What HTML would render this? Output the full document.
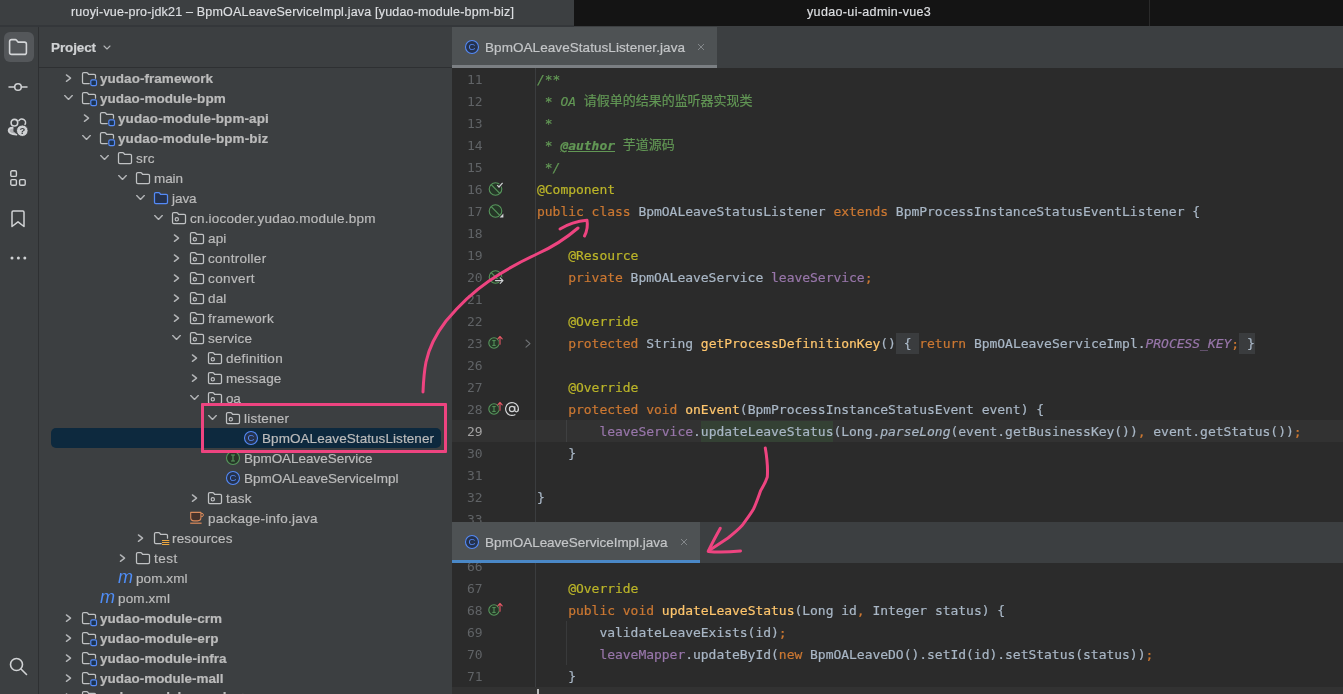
<!DOCTYPE html><html><head><meta charset="utf-8"><title>IDE</title><style>
html,body{margin:0;padding:0;background:#2b2b2b}
body{-webkit-font-smoothing:antialiased;will-change:transform;width:1343px;height:694px;overflow:hidden;background:#2b2b2b;position:relative;font-family:"Liberation Sans", "Noto Sans CJK SC", sans-serif;font-size:13px;color:#bbbbbb}
.abs{position:absolute}
.t{position:absolute;white-space:pre;line-height:20px;height:20px;color:#bbbbbb;font-size:13.5px;margin-top:0.5px;-webkit-text-stroke:0.2px currentColor}
.b{font-weight:bold}
.code{position:absolute;white-space:pre;font-family:"DejaVu Sans Mono", "Liberation Mono", "Noto Sans CJK SC", monospace;font-size:13px;letter-spacing:-0.026px;line-height:22px;height:22px;color:#a9b7c6;margin-top:0.9px;-webkit-text-stroke:0.2px currentColor}
.ln{position:absolute;font-family:"DejaVu Sans Mono", "Liberation Mono", "Noto Sans CJK SC", monospace;font-size:13px;letter-spacing:-0.026px;line-height:22px;height:22px;color:#606366;text-align:right;width:30.5px;margin-top:0.9px}
.k{color:#cc7832}.a{color:#bbb529}.c{color:#629755;font-style:italic}.f{color:#9876aa}.m{color:#ffc66d}
.sf{color:#9876aa;font-style:italic}.sm{font-style:italic}.tag{color:#629755;font-style:italic;font-weight:bold;text-decoration:underline}
.mv{position:absolute;width:18px;height:20px;line-height:20px;font-style:italic;font-size:19px;color:#4f8df6;transform:scaleX(0.95);transform-origin:0 0}
.cj{font-style:normal;position:relative;top:-1px}
.fold{background:#3a3c3e;padding:3.3px 0 3.5px}
.hl{background:#344134;padding:3.3px 0 3.5px}

</style></head><body>
<div class="abs" style="left:0;top:0;width:1343px;height:26px;background:#141414"></div>
<div class="abs" style="left:0;top:0;width:574px;height:27px;background:#34373a"></div>
<div class="abs" style="left:0;top:0;width:574px;height:25px;background:#3c3f41"></div>
<div class="abs" style="left:1149px;top:0;width:1px;height:26px;background:#2a2a2a"></div>
<div class="abs" style="left:71px;top:3px;line-height:18px;font-size:12.5px;color:#dddfe2;-webkit-text-stroke:0.2px #dddfe2;white-space:pre;letter-spacing:0.193px;">ruoyi-vue-pro-jdk21 – BpmOALeaveServiceImpl.java [yudao-module-bpm-biz]</div>
<div class="abs" style="left:807px;top:3px;line-height:18px;font-size:12.5px;color:#dddfe2;-webkit-text-stroke:0.2px #dddfe2;white-space:pre;letter-spacing:0.355px;">yudao-ui-admin-vue3</div>
<div class="abs" style="left:0;top:27px;width:452px;height:667px;background:#3c3f41"></div>
<div class="abs" style="left:574px;top:26px;width:769px;height:2px;background:#3c3f41"></div>
<div class="abs" style="left:38px;top:27px;width:1px;height:667px;background:#2e3032"></div>
<div class="abs" style="left:39px;top:67px;width:413px;height:1px;background:#2e3032"></div>
<div class="abs" style="left:3.5px;top:32px;width:30px;height:30px;border-radius:6px;background:#54575a"></div>
<svg style="position:absolute;left:8px;top:38px;overflow:visible" width="20" height="18" viewBox="0 0 20 18"><path d="M1.6 3.6 Q1.6 1.6 3.6 1.6 H7.3 Q8 1.6 8.5 2.2 L10 4.1 H16.4 Q18.4 4.1 18.4 6.1 V14.4 Q18.4 16.4 16.4 16.4 H3.6 Q1.6 16.4 1.6 14.4 Z" fill="none" stroke="#d4d6d8" stroke-width="1.6" stroke-linejoin="round"/></svg>
<svg style="position:absolute;left:8px;top:79px;overflow:visible" width="20" height="16" viewBox="0 0 20 16"><path d="M1 8 H6.6 M13.4 8 H19" stroke="#d0d2d4" stroke-width="1.5" stroke-linecap="round"/><circle cx="10" cy="8" r="3.3" fill="none" stroke="#d0d2d4" stroke-width="1.5"/></svg>
<svg style="position:absolute;left:6px;top:116px;overflow:visible" width="24" height="22" viewBox="0 0 24 22"><circle cx="8.4" cy="6.7" r="3.3" fill="none" stroke="#d0d2d4" stroke-width="1.6"/><path d="M12.9 4.6 A3.5 3.5 0 0 1 18.9 8.6" fill="none" stroke="#d0d2d4" stroke-width="1.6" stroke-linecap="round"/><path d="M6.6 11.8 C4 11.9 2.7 13.2 2.7 14.8 C2.8 16.8 5.6 18.3 10.4 18.6" fill="none" stroke="#d0d2d4" stroke-width="1.9" stroke-linecap="round"/><path d="M7.4 12 H6.4 C3.8 12 2.7 13.4 2.7 15 C2.8 17 6 18.4 10.4 18.6 L9 16.6 L7.4 15.6 Z" fill="#d0d2d4" fill-opacity="0.75" stroke="none"/><circle cx="16.3" cy="14.7" r="5.8" fill="#cfd1d3" stroke="#3c3f41" stroke-width="1"/><text x="16.3" y="18" text-anchor="middle" font-size="9.5" font-weight="bold" font-family='"Liberation Sans",sans-serif' fill="#3c3f41">?</text></svg>
<svg style="position:absolute;left:10px;top:170px;overflow:visible" width="16" height="16" viewBox="0 0 16 16"><rect x="0.8" y="0.8" width="5.6" height="5.6" rx="1.2" fill="none" stroke="#d0d2d4" stroke-width="1.4"/><rect x="0.8" y="9.6" width="5.6" height="5.6" rx="1.2" fill="none" stroke="#d0d2d4" stroke-width="1.4"/><rect x="9.6" y="9.6" width="5.6" height="5.6" rx="1.2" fill="none" stroke="#d0d2d4" stroke-width="1.4"/></svg>
<svg style="position:absolute;left:11px;top:210px;overflow:visible" width="14" height="18" viewBox="0 0 14 18"><path d="M1 2.2 Q1 1 2.2 1 H11.8 Q13 1 13 2.2 V16.5 L7 11.8 L1 16.5 Z" fill="none" stroke="#d0d2d4" stroke-width="1.5" stroke-linejoin="round"/></svg>
<svg style="position:absolute;left:10px;top:256px;overflow:visible" width="17" height="4" viewBox="0 0 17 4"><circle cx="2" cy="2" r="1.5" fill="#d0d2d4"/><circle cx="8.4" cy="2" r="1.5" fill="#d0d2d4"/><circle cx="14.8" cy="2" r="1.5" fill="#d0d2d4"/></svg>
<svg style="position:absolute;left:9px;top:656.8px;overflow:visible" width="19" height="19" viewBox="0 0 19 19"><circle cx="7.5" cy="7.5" r="6" fill="none" stroke="#d0d2d4" stroke-width="1.6"/><path d="M12 12 L17.5 17.5" stroke="#d0d2d4" stroke-width="1.6" stroke-linecap="round"/></svg>
<div class="t b" style="left:51px;top:37px;color:#d0d2d4;letter-spacing:-0.120px;">Project</div>
<svg style="position:absolute;left:103px;top:45px;overflow:visible" width="8" height="5" viewBox="0 0 8 5"><path d="M1 1 L4 4 L7 1" fill="none" stroke="#b4b6b8" stroke-width="1.1" stroke-linecap="round" stroke-linejoin="round"/></svg>
<div class="abs" style="left:51px;top:428px;width:390px;height:20px;border-radius:5px;background:#0d293e"></div>
<svg style="position:absolute;left:60px;top:70px;overflow:visible" width="16" height="16" viewBox="0 0 16 16"><path d="M6.4 4.9 L10.6 8.15 L6.4 11.4" fill="none" stroke="#b4b6b8" stroke-width="1.35" stroke-linecap="round" stroke-linejoin="round"/></svg>
<svg style="position:absolute;left:81px;top:70px;overflow:visible" width="16" height="16" viewBox="0 0 16 16"><path d="M8.2 13.5 H2.8 Q1.5 13.5 1.5 12.2 V3.8 Q1.5 2.5 2.8 2.5 H5.6 Q6.2 2.5 6.6 3 L7.6 4.3 H13.2 Q14.5 4.3 14.5 5.6 V8.2" fill="none" stroke="#c0c2c4" stroke-width="1.25" stroke-linejoin="round" stroke-linecap="round"/><rect x="9.8" y="9.9" width="5.7" height="5.7" rx="1.3" fill="#1d3350" stroke="#548af7" stroke-width="1.2"/></svg>
<div class="t b" style="left:100px;top:68px;letter-spacing:0.039px;">yudao-framework</div>
<svg style="position:absolute;left:60px;top:90px;overflow:visible" width="16" height="16" viewBox="0 0 16 16"><path d="M4.7 5.6 L8.5 9.4 L12.3 5.6" fill="none" stroke="#b4b6b8" stroke-width="1.35" stroke-linecap="round" stroke-linejoin="round"/></svg>
<svg style="position:absolute;left:81px;top:90px;overflow:visible" width="16" height="16" viewBox="0 0 16 16"><path d="M8.2 13.5 H2.8 Q1.5 13.5 1.5 12.2 V3.8 Q1.5 2.5 2.8 2.5 H5.6 Q6.2 2.5 6.6 3 L7.6 4.3 H13.2 Q14.5 4.3 14.5 5.6 V8.2" fill="none" stroke="#c0c2c4" stroke-width="1.25" stroke-linejoin="round" stroke-linecap="round"/><rect x="9.8" y="9.9" width="5.7" height="5.7" rx="1.3" fill="#1d3350" stroke="#548af7" stroke-width="1.2"/></svg>
<div class="t b" style="left:100px;top:88px;letter-spacing:0.029px;">yudao-module-bpm</div>
<svg style="position:absolute;left:78px;top:110px;overflow:visible" width="16" height="16" viewBox="0 0 16 16"><path d="M6.4 4.9 L10.6 8.15 L6.4 11.4" fill="none" stroke="#b4b6b8" stroke-width="1.35" stroke-linecap="round" stroke-linejoin="round"/></svg>
<svg style="position:absolute;left:99px;top:110px;overflow:visible" width="16" height="16" viewBox="0 0 16 16"><path d="M8.2 13.5 H2.8 Q1.5 13.5 1.5 12.2 V3.8 Q1.5 2.5 2.8 2.5 H5.6 Q6.2 2.5 6.6 3 L7.6 4.3 H13.2 Q14.5 4.3 14.5 5.6 V8.2" fill="none" stroke="#c0c2c4" stroke-width="1.25" stroke-linejoin="round" stroke-linecap="round"/><rect x="9.8" y="9.9" width="5.7" height="5.7" rx="1.3" fill="#1d3350" stroke="#548af7" stroke-width="1.2"/></svg>
<div class="t b" style="left:118px;top:108px;letter-spacing:0.079px;">yudao-module-bpm-api</div>
<svg style="position:absolute;left:78px;top:130px;overflow:visible" width="16" height="16" viewBox="0 0 16 16"><path d="M4.7 5.6 L8.5 9.4 L12.3 5.6" fill="none" stroke="#b4b6b8" stroke-width="1.35" stroke-linecap="round" stroke-linejoin="round"/></svg>
<svg style="position:absolute;left:99px;top:130px;overflow:visible" width="16" height="16" viewBox="0 0 16 16"><path d="M8.2 13.5 H2.8 Q1.5 13.5 1.5 12.2 V3.8 Q1.5 2.5 2.8 2.5 H5.6 Q6.2 2.5 6.6 3 L7.6 4.3 H13.2 Q14.5 4.3 14.5 5.6 V8.2" fill="none" stroke="#c0c2c4" stroke-width="1.25" stroke-linejoin="round" stroke-linecap="round"/><rect x="9.8" y="9.9" width="5.7" height="5.7" rx="1.3" fill="#1d3350" stroke="#548af7" stroke-width="1.2"/></svg>
<div class="t b" style="left:118px;top:128px;letter-spacing:0.092px;">yudao-module-bpm-biz</div>
<svg style="position:absolute;left:96px;top:150px;overflow:visible" width="16" height="16" viewBox="0 0 16 16"><path d="M4.7 5.6 L8.5 9.4 L12.3 5.6" fill="none" stroke="#b4b6b8" stroke-width="1.35" stroke-linecap="round" stroke-linejoin="round"/></svg>
<svg style="position:absolute;left:117px;top:150px;overflow:visible" width="16" height="16" viewBox="0 0 16 16"><path d="M1.5 3.8 Q1.5 2.5 2.8 2.5 H5.6 Q6.2 2.5 6.6 3 L7.6 4.3 H13.2 Q14.5 4.3 14.5 5.6 V12.2 Q14.5 13.5 13.2 13.5 H2.8 Q1.5 13.5 1.5 12.2 Z" fill="none" stroke="#c0c2c4" stroke-width="1.25" stroke-linejoin="round"/></svg>
<div class="t" style="left:136px;top:148px;letter-spacing:0.280px;">src</div>
<svg style="position:absolute;left:114px;top:170px;overflow:visible" width="16" height="16" viewBox="0 0 16 16"><path d="M4.7 5.6 L8.5 9.4 L12.3 5.6" fill="none" stroke="#b4b6b8" stroke-width="1.35" stroke-linecap="round" stroke-linejoin="round"/></svg>
<svg style="position:absolute;left:135px;top:170px;overflow:visible" width="16" height="16" viewBox="0 0 16 16"><path d="M1.5 3.8 Q1.5 2.5 2.8 2.5 H5.6 Q6.2 2.5 6.6 3 L7.6 4.3 H13.2 Q14.5 4.3 14.5 5.6 V12.2 Q14.5 13.5 13.2 13.5 H2.8 Q1.5 13.5 1.5 12.2 Z" fill="none" stroke="#c0c2c4" stroke-width="1.25" stroke-linejoin="round"/></svg>
<div class="t" style="left:154px;top:168px;letter-spacing:-0.076px;">main</div>
<svg style="position:absolute;left:132px;top:190px;overflow:visible" width="16" height="16" viewBox="0 0 16 16"><path d="M4.7 5.6 L8.5 9.4 L12.3 5.6" fill="none" stroke="#b4b6b8" stroke-width="1.35" stroke-linecap="round" stroke-linejoin="round"/></svg>
<svg style="position:absolute;left:153px;top:190px;overflow:visible" width="16" height="16" viewBox="0 0 16 16"><path d="M1.5 3.8 Q1.5 2.5 2.8 2.5 H5.6 Q6.2 2.5 6.6 3 L7.6 4.3 H13.2 Q14.5 4.3 14.5 5.6 V12.2 Q14.5 13.5 13.2 13.5 H2.8 Q1.5 13.5 1.5 12.2 Z" fill="#25324d" stroke="#548af7" stroke-width="1.25" stroke-linejoin="round"/></svg>
<div class="t" style="left:172px;top:188px;letter-spacing:-0.047px;">java</div>
<svg style="position:absolute;left:150px;top:210px;overflow:visible" width="16" height="16" viewBox="0 0 16 16"><path d="M4.7 5.6 L8.5 9.4 L12.3 5.6" fill="none" stroke="#b4b6b8" stroke-width="1.35" stroke-linecap="round" stroke-linejoin="round"/></svg>
<svg style="position:absolute;left:171px;top:210px;overflow:visible" width="16" height="16" viewBox="0 0 16 16"><path d="M1.5 3.8 Q1.5 2.5 2.8 2.5 H5.6 Q6.2 2.5 6.6 3 L7.6 4.3 H13.2 Q14.5 4.3 14.5 5.6 V12.2 Q14.5 13.5 13.2 13.5 H2.8 Q1.5 13.5 1.5 12.2 Z" fill="none" stroke="#c0c2c4" stroke-width="1.25" stroke-linejoin="round"/><circle cx="5.8" cy="9.3" r="1.65" fill="none" stroke="#c0c2c4" stroke-width="1.15"/></svg>
<div class="t" style="left:190px;top:208px;letter-spacing:0.203px;">cn.iocoder.yudao.module.bpm</div>
<svg style="position:absolute;left:168px;top:230px;overflow:visible" width="16" height="16" viewBox="0 0 16 16"><path d="M6.4 4.9 L10.6 8.15 L6.4 11.4" fill="none" stroke="#b4b6b8" stroke-width="1.35" stroke-linecap="round" stroke-linejoin="round"/></svg>
<svg style="position:absolute;left:189px;top:230px;overflow:visible" width="16" height="16" viewBox="0 0 16 16"><path d="M1.5 3.8 Q1.5 2.5 2.8 2.5 H5.6 Q6.2 2.5 6.6 3 L7.6 4.3 H13.2 Q14.5 4.3 14.5 5.6 V12.2 Q14.5 13.5 13.2 13.5 H2.8 Q1.5 13.5 1.5 12.2 Z" fill="none" stroke="#c0c2c4" stroke-width="1.25" stroke-linejoin="round"/><circle cx="5.8" cy="9.3" r="1.65" fill="none" stroke="#c0c2c4" stroke-width="1.15"/></svg>
<div class="t" style="left:208px;top:228px;letter-spacing:0.154px;">api</div>
<svg style="position:absolute;left:168px;top:250px;overflow:visible" width="16" height="16" viewBox="0 0 16 16"><path d="M6.4 4.9 L10.6 8.15 L6.4 11.4" fill="none" stroke="#b4b6b8" stroke-width="1.35" stroke-linecap="round" stroke-linejoin="round"/></svg>
<svg style="position:absolute;left:189px;top:250px;overflow:visible" width="16" height="16" viewBox="0 0 16 16"><path d="M1.5 3.8 Q1.5 2.5 2.8 2.5 H5.6 Q6.2 2.5 6.6 3 L7.6 4.3 H13.2 Q14.5 4.3 14.5 5.6 V12.2 Q14.5 13.5 13.2 13.5 H2.8 Q1.5 13.5 1.5 12.2 Z" fill="none" stroke="#c0c2c4" stroke-width="1.25" stroke-linejoin="round"/><circle cx="5.8" cy="9.3" r="1.65" fill="none" stroke="#c0c2c4" stroke-width="1.15"/></svg>
<div class="t" style="left:208px;top:248px;letter-spacing:0.291px;">controller</div>
<svg style="position:absolute;left:168px;top:270px;overflow:visible" width="16" height="16" viewBox="0 0 16 16"><path d="M6.4 4.9 L10.6 8.15 L6.4 11.4" fill="none" stroke="#b4b6b8" stroke-width="1.35" stroke-linecap="round" stroke-linejoin="round"/></svg>
<svg style="position:absolute;left:189px;top:270px;overflow:visible" width="16" height="16" viewBox="0 0 16 16"><path d="M1.5 3.8 Q1.5 2.5 2.8 2.5 H5.6 Q6.2 2.5 6.6 3 L7.6 4.3 H13.2 Q14.5 4.3 14.5 5.6 V12.2 Q14.5 13.5 13.2 13.5 H2.8 Q1.5 13.5 1.5 12.2 Z" fill="none" stroke="#c0c2c4" stroke-width="1.25" stroke-linejoin="round"/><circle cx="5.8" cy="9.3" r="1.65" fill="none" stroke="#c0c2c4" stroke-width="1.15"/></svg>
<div class="t" style="left:208px;top:268px;letter-spacing:0.387px;">convert</div>
<svg style="position:absolute;left:168px;top:290px;overflow:visible" width="16" height="16" viewBox="0 0 16 16"><path d="M6.4 4.9 L10.6 8.15 L6.4 11.4" fill="none" stroke="#b4b6b8" stroke-width="1.35" stroke-linecap="round" stroke-linejoin="round"/></svg>
<svg style="position:absolute;left:189px;top:290px;overflow:visible" width="16" height="16" viewBox="0 0 16 16"><path d="M1.5 3.8 Q1.5 2.5 2.8 2.5 H5.6 Q6.2 2.5 6.6 3 L7.6 4.3 H13.2 Q14.5 4.3 14.5 5.6 V12.2 Q14.5 13.5 13.2 13.5 H2.8 Q1.5 13.5 1.5 12.2 Z" fill="none" stroke="#c0c2c4" stroke-width="1.25" stroke-linejoin="round"/><circle cx="5.8" cy="9.3" r="1.65" fill="none" stroke="#c0c2c4" stroke-width="1.15"/></svg>
<div class="t" style="left:208px;top:288px;letter-spacing:0.154px;">dal</div>
<svg style="position:absolute;left:168px;top:310px;overflow:visible" width="16" height="16" viewBox="0 0 16 16"><path d="M6.4 4.9 L10.6 8.15 L6.4 11.4" fill="none" stroke="#b4b6b8" stroke-width="1.35" stroke-linecap="round" stroke-linejoin="round"/></svg>
<svg style="position:absolute;left:189px;top:310px;overflow:visible" width="16" height="16" viewBox="0 0 16 16"><path d="M1.5 3.8 Q1.5 2.5 2.8 2.5 H5.6 Q6.2 2.5 6.6 3 L7.6 4.3 H13.2 Q14.5 4.3 14.5 5.6 V12.2 Q14.5 13.5 13.2 13.5 H2.8 Q1.5 13.5 1.5 12.2 Z" fill="none" stroke="#c0c2c4" stroke-width="1.25" stroke-linejoin="round"/><circle cx="5.8" cy="9.3" r="1.65" fill="none" stroke="#c0c2c4" stroke-width="1.15"/></svg>
<div class="t" style="left:208px;top:308px;letter-spacing:0.328px;">framework</div>
<svg style="position:absolute;left:168px;top:330px;overflow:visible" width="16" height="16" viewBox="0 0 16 16"><path d="M4.7 5.6 L8.5 9.4 L12.3 5.6" fill="none" stroke="#b4b6b8" stroke-width="1.35" stroke-linecap="round" stroke-linejoin="round"/></svg>
<svg style="position:absolute;left:189px;top:330px;overflow:visible" width="16" height="16" viewBox="0 0 16 16"><path d="M1.5 3.8 Q1.5 2.5 2.8 2.5 H5.6 Q6.2 2.5 6.6 3 L7.6 4.3 H13.2 Q14.5 4.3 14.5 5.6 V12.2 Q14.5 13.5 13.2 13.5 H2.8 Q1.5 13.5 1.5 12.2 Z" fill="none" stroke="#c0c2c4" stroke-width="1.25" stroke-linejoin="round"/><circle cx="5.8" cy="9.3" r="1.65" fill="none" stroke="#c0c2c4" stroke-width="1.15"/></svg>
<div class="t" style="left:208px;top:328px;letter-spacing:0.190px;">service</div>
<svg style="position:absolute;left:186px;top:350px;overflow:visible" width="16" height="16" viewBox="0 0 16 16"><path d="M6.4 4.9 L10.6 8.15 L6.4 11.4" fill="none" stroke="#b4b6b8" stroke-width="1.35" stroke-linecap="round" stroke-linejoin="round"/></svg>
<svg style="position:absolute;left:207px;top:350px;overflow:visible" width="16" height="16" viewBox="0 0 16 16"><path d="M1.5 3.8 Q1.5 2.5 2.8 2.5 H5.6 Q6.2 2.5 6.6 3 L7.6 4.3 H13.2 Q14.5 4.3 14.5 5.6 V12.2 Q14.5 13.5 13.2 13.5 H2.8 Q1.5 13.5 1.5 12.2 Z" fill="none" stroke="#c0c2c4" stroke-width="1.25" stroke-linejoin="round"/><circle cx="5.8" cy="9.3" r="1.65" fill="none" stroke="#c0c2c4" stroke-width="1.15"/></svg>
<div class="t" style="left:226px;top:348px;letter-spacing:0.290px;">definition</div>
<svg style="position:absolute;left:186px;top:370px;overflow:visible" width="16" height="16" viewBox="0 0 16 16"><path d="M6.4 4.9 L10.6 8.15 L6.4 11.4" fill="none" stroke="#b4b6b8" stroke-width="1.35" stroke-linecap="round" stroke-linejoin="round"/></svg>
<svg style="position:absolute;left:207px;top:370px;overflow:visible" width="16" height="16" viewBox="0 0 16 16"><path d="M1.5 3.8 Q1.5 2.5 2.8 2.5 H5.6 Q6.2 2.5 6.6 3 L7.6 4.3 H13.2 Q14.5 4.3 14.5 5.6 V12.2 Q14.5 13.5 13.2 13.5 H2.8 Q1.5 13.5 1.5 12.2 Z" fill="none" stroke="#c0c2c4" stroke-width="1.25" stroke-linejoin="round"/><circle cx="5.8" cy="9.3" r="1.65" fill="none" stroke="#c0c2c4" stroke-width="1.15"/></svg>
<div class="t" style="left:226px;top:368px;letter-spacing:0.080px;">message</div>
<svg style="position:absolute;left:186px;top:390px;overflow:visible" width="16" height="16" viewBox="0 0 16 16"><path d="M4.7 5.6 L8.5 9.4 L12.3 5.6" fill="none" stroke="#b4b6b8" stroke-width="1.35" stroke-linecap="round" stroke-linejoin="round"/></svg>
<svg style="position:absolute;left:207px;top:390px;overflow:visible" width="16" height="16" viewBox="0 0 16 16"><path d="M1.5 3.8 Q1.5 2.5 2.8 2.5 H5.6 Q6.2 2.5 6.6 3 L7.6 4.3 H13.2 Q14.5 4.3 14.5 5.6 V12.2 Q14.5 13.5 13.2 13.5 H2.8 Q1.5 13.5 1.5 12.2 Z" fill="none" stroke="#c0c2c4" stroke-width="1.25" stroke-linejoin="round"/><circle cx="5.8" cy="9.3" r="1.65" fill="none" stroke="#c0c2c4" stroke-width="1.15"/></svg>
<div class="t" style="left:226px;top:388px;letter-spacing:-0.221px;">oa</div>
<svg style="position:absolute;left:204px;top:410px;overflow:visible" width="16" height="16" viewBox="0 0 16 16"><path d="M4.7 5.6 L8.5 9.4 L12.3 5.6" fill="none" stroke="#b4b6b8" stroke-width="1.35" stroke-linecap="round" stroke-linejoin="round"/></svg>
<svg style="position:absolute;left:225px;top:410px;overflow:visible" width="16" height="16" viewBox="0 0 16 16"><path d="M1.5 3.8 Q1.5 2.5 2.8 2.5 H5.6 Q6.2 2.5 6.6 3 L7.6 4.3 H13.2 Q14.5 4.3 14.5 5.6 V12.2 Q14.5 13.5 13.2 13.5 H2.8 Q1.5 13.5 1.5 12.2 Z" fill="none" stroke="#c0c2c4" stroke-width="1.25" stroke-linejoin="round"/><circle cx="5.8" cy="9.3" r="1.65" fill="none" stroke="#c0c2c4" stroke-width="1.15"/></svg>
<div class="t" style="left:244px;top:408px;letter-spacing:0.209px;">listener</div>
<svg style="position:absolute;left:243px;top:430px;overflow:visible" width="16" height="16" viewBox="0 0 16 16"><circle cx="8" cy="8" r="6.5" fill="#25324d" stroke="#548af7" stroke-width="1.1"/><text x="8" y="11.3" text-anchor="middle" font-family='"Liberation Sans",sans-serif' font-size="9.5" fill="#548af7">C</text></svg>
<div class="t" style="left:262px;top:428px;letter-spacing:0.070px;">BpmOALeaveStatusListener</div>
<svg style="position:absolute;left:225px;top:450px;overflow:visible" width="16" height="16" viewBox="0 0 16 16"><circle cx="8" cy="8" r="6.5" fill="#253627" stroke="#57965c" stroke-width="1.1"/><path d="M6 5 H10 M6 11 H10 M8 5 V11" stroke="#57965c" stroke-width="1.1" fill="none"/></svg>
<div class="t" style="left:244px;top:448px;letter-spacing:-0.034px;">BpmOALeaveService</div>
<svg style="position:absolute;left:225px;top:470px;overflow:visible" width="16" height="16" viewBox="0 0 16 16"><circle cx="8" cy="8" r="6.5" fill="#25324d" stroke="#548af7" stroke-width="1.1"/><text x="8" y="11.3" text-anchor="middle" font-family='"Liberation Sans",sans-serif' font-size="9.5" fill="#548af7">C</text></svg>
<div class="t" style="left:244px;top:468px;letter-spacing:-0.004px;">BpmOALeaveServiceImpl</div>
<svg style="position:absolute;left:186px;top:490px;overflow:visible" width="16" height="16" viewBox="0 0 16 16"><path d="M6.4 4.9 L10.6 8.15 L6.4 11.4" fill="none" stroke="#b4b6b8" stroke-width="1.35" stroke-linecap="round" stroke-linejoin="round"/></svg>
<svg style="position:absolute;left:207px;top:490px;overflow:visible" width="16" height="16" viewBox="0 0 16 16"><path d="M1.5 3.8 Q1.5 2.5 2.8 2.5 H5.6 Q6.2 2.5 6.6 3 L7.6 4.3 H13.2 Q14.5 4.3 14.5 5.6 V12.2 Q14.5 13.5 13.2 13.5 H2.8 Q1.5 13.5 1.5 12.2 Z" fill="none" stroke="#c0c2c4" stroke-width="1.25" stroke-linejoin="round"/><circle cx="5.8" cy="9.3" r="1.65" fill="none" stroke="#c0c2c4" stroke-width="1.15"/></svg>
<div class="t" style="left:226px;top:488px;letter-spacing:0.210px;">task</div>
<svg style="position:absolute;left:189px;top:510px;overflow:visible" width="16" height="16" viewBox="0 0 16 16"><path d="M1.7 2.4 H11.9 V7.6 Q11.9 10.9 8.6 10.9 H5 Q1.7 10.9 1.7 7.6 Z" fill="#45322b" stroke="#d98a5b" stroke-width="1.1" stroke-linejoin="round"/><path d="M12 3.4 H13 Q14.4 3.4 14.4 4.9 Q14.4 6.6 12.8 6.6 H12" fill="none" stroke="#d98a5b" stroke-width="1"/><path d="M1.2 13.2 H12.6" stroke="#d98a5b" stroke-width="1.2"/></svg>
<div class="t" style="left:208px;top:508px;letter-spacing:0.223px;">package-info.java</div>
<svg style="position:absolute;left:132px;top:530px;overflow:visible" width="16" height="16" viewBox="0 0 16 16"><path d="M6.4 4.9 L10.6 8.15 L6.4 11.4" fill="none" stroke="#b4b6b8" stroke-width="1.35" stroke-linecap="round" stroke-linejoin="round"/></svg>
<svg style="position:absolute;left:153px;top:530px;overflow:visible" width="16" height="16" viewBox="0 0 16 16"><path d="M8.2 13.5 H2.8 Q1.5 13.5 1.5 12.2 V3.8 Q1.5 2.5 2.8 2.5 H5.6 Q6.2 2.5 6.6 3 L7.6 4.3 H13.2 Q14.5 4.3 14.5 5.6 V8.2" fill="none" stroke="#c0c2c4" stroke-width="1.25" stroke-linejoin="round" stroke-linecap="round"/><path d="M9 10.5 H16.3 M9 12.5 H16.3 M9 14.5 H16.3" stroke="#eaa640" stroke-width="1.1"/></svg>
<div class="t" style="left:172px;top:528px;letter-spacing:0.143px;">resources</div>
<svg style="position:absolute;left:114px;top:550px;overflow:visible" width="16" height="16" viewBox="0 0 16 16"><path d="M6.4 4.9 L10.6 8.15 L6.4 11.4" fill="none" stroke="#b4b6b8" stroke-width="1.35" stroke-linecap="round" stroke-linejoin="round"/></svg>
<svg style="position:absolute;left:135px;top:550px;overflow:visible" width="16" height="16" viewBox="0 0 16 16"><path d="M1.5 3.8 Q1.5 2.5 2.8 2.5 H5.6 Q6.2 2.5 6.6 3 L7.6 4.3 H13.2 Q14.5 4.3 14.5 5.6 V12.2 Q14.5 13.5 13.2 13.5 H2.8 Q1.5 13.5 1.5 12.2 Z" fill="none" stroke="#c0c2c4" stroke-width="1.25" stroke-linejoin="round"/></svg>
<div class="t" style="left:154px;top:548px;letter-spacing:0.496px;">test</div>
<div class="mv" style="left:118px;top:567px">m</div>
<div class="t" style="left:136px;top:568px;letter-spacing:0.075px;">pom.xml</div>
<div class="mv" style="left:100px;top:587px">m</div>
<div class="t" style="left:118px;top:588px;letter-spacing:0.151px;">pom.xml</div>
<svg style="position:absolute;left:60px;top:610px;overflow:visible" width="16" height="16" viewBox="0 0 16 16"><path d="M6.4 4.9 L10.6 8.15 L6.4 11.4" fill="none" stroke="#b4b6b8" stroke-width="1.35" stroke-linecap="round" stroke-linejoin="round"/></svg>
<svg style="position:absolute;left:81px;top:610px;overflow:visible" width="16" height="16" viewBox="0 0 16 16"><path d="M8.2 13.5 H2.8 Q1.5 13.5 1.5 12.2 V3.8 Q1.5 2.5 2.8 2.5 H5.6 Q6.2 2.5 6.6 3 L7.6 4.3 H13.2 Q14.5 4.3 14.5 5.6 V8.2" fill="none" stroke="#c0c2c4" stroke-width="1.25" stroke-linejoin="round" stroke-linecap="round"/><rect x="9.8" y="9.9" width="5.7" height="5.7" rx="1.3" fill="#1d3350" stroke="#548af7" stroke-width="1.2"/></svg>
<div class="t b" style="left:100px;top:608px;letter-spacing:0.031px;">yudao-module-crm</div>
<svg style="position:absolute;left:60px;top:630px;overflow:visible" width="16" height="16" viewBox="0 0 16 16"><path d="M6.4 4.9 L10.6 8.15 L6.4 11.4" fill="none" stroke="#b4b6b8" stroke-width="1.35" stroke-linecap="round" stroke-linejoin="round"/></svg>
<svg style="position:absolute;left:81px;top:630px;overflow:visible" width="16" height="16" viewBox="0 0 16 16"><path d="M8.2 13.5 H2.8 Q1.5 13.5 1.5 12.2 V3.8 Q1.5 2.5 2.8 2.5 H5.6 Q6.2 2.5 6.6 3 L7.6 4.3 H13.2 Q14.5 4.3 14.5 5.6 V8.2" fill="none" stroke="#c0c2c4" stroke-width="1.25" stroke-linejoin="round" stroke-linecap="round"/><rect x="9.8" y="9.9" width="5.7" height="5.7" rx="1.3" fill="#1d3350" stroke="#548af7" stroke-width="1.2"/></svg>
<div class="t b" style="left:100px;top:628px;letter-spacing:0.047px;">yudao-module-erp</div>
<svg style="position:absolute;left:60px;top:650px;overflow:visible" width="16" height="16" viewBox="0 0 16 16"><path d="M6.4 4.9 L10.6 8.15 L6.4 11.4" fill="none" stroke="#b4b6b8" stroke-width="1.35" stroke-linecap="round" stroke-linejoin="round"/></svg>
<svg style="position:absolute;left:81px;top:650px;overflow:visible" width="16" height="16" viewBox="0 0 16 16"><path d="M8.2 13.5 H2.8 Q1.5 13.5 1.5 12.2 V3.8 Q1.5 2.5 2.8 2.5 H5.6 Q6.2 2.5 6.6 3 L7.6 4.3 H13.2 Q14.5 4.3 14.5 5.6 V8.2" fill="none" stroke="#c0c2c4" stroke-width="1.25" stroke-linejoin="round" stroke-linecap="round"/><rect x="9.8" y="9.9" width="5.7" height="5.7" rx="1.3" fill="#1d3350" stroke="#548af7" stroke-width="1.2"/></svg>
<div class="t b" style="left:100px;top:648px;letter-spacing:0.028px;">yudao-module-infra</div>
<svg style="position:absolute;left:60px;top:670px;overflow:visible" width="16" height="16" viewBox="0 0 16 16"><path d="M6.4 4.9 L10.6 8.15 L6.4 11.4" fill="none" stroke="#b4b6b8" stroke-width="1.35" stroke-linecap="round" stroke-linejoin="round"/></svg>
<svg style="position:absolute;left:81px;top:670px;overflow:visible" width="16" height="16" viewBox="0 0 16 16"><path d="M8.2 13.5 H2.8 Q1.5 13.5 1.5 12.2 V3.8 Q1.5 2.5 2.8 2.5 H5.6 Q6.2 2.5 6.6 3 L7.6 4.3 H13.2 Q14.5 4.3 14.5 5.6 V8.2" fill="none" stroke="#c0c2c4" stroke-width="1.25" stroke-linejoin="round" stroke-linecap="round"/><rect x="9.8" y="9.9" width="5.7" height="5.7" rx="1.3" fill="#1d3350" stroke="#548af7" stroke-width="1.2"/></svg>
<div class="t b" style="left:100px;top:668px;letter-spacing:-0.016px;">yudao-module-mall</div>
<svg style="position:absolute;left:60px;top:688.5px;overflow:visible" width="16" height="16" viewBox="0 0 16 16"><path d="M6.4 4.9 L10.6 8.15 L6.4 11.4" fill="none" stroke="#b4b6b8" stroke-width="1.35" stroke-linecap="round" stroke-linejoin="round"/></svg>
<svg style="position:absolute;left:81px;top:688.5px;overflow:visible" width="16" height="16" viewBox="0 0 16 16"><path d="M8.2 13.5 H2.8 Q1.5 13.5 1.5 12.2 V3.8 Q1.5 2.5 2.8 2.5 H5.6 Q6.2 2.5 6.6 3 L7.6 4.3 H13.2 Q14.5 4.3 14.5 5.6 V8.2" fill="none" stroke="#c0c2c4" stroke-width="1.25" stroke-linejoin="round" stroke-linecap="round"/><rect x="9.8" y="9.9" width="5.7" height="5.7" rx="1.3" fill="#1d3350" stroke="#548af7" stroke-width="1.2"/></svg>
<div class="t b" style="left:100px;top:686.5px;letter-spacing:-0.340px;">yudao-module-member</div>
<div class="abs" style="left:452px;top:27px;width:891px;height:41px;background:#3c3f41"></div>
<div class="abs" style="left:452px;top:27px;width:265px;height:41px;background:#4e5254"></div>
<div class="abs" style="left:452px;top:65px;width:265px;height:3px;background:#7b7f83"></div>
<svg style="position:absolute;left:464px;top:39px;overflow:visible" width="16" height="16" viewBox="0 0 16 16"><circle cx="8" cy="8" r="6.5" fill="#25324d" stroke="#548af7" stroke-width="1.1"/><text x="8" y="11.3" text-anchor="middle" font-family='"Liberation Sans",sans-serif' font-size="9.5" fill="#548af7">C</text></svg>
<div class="t" style="left:485px;top:37px;color:#c4c6c8;letter-spacing:0.066px;">BpmOALeaveStatusListener.java</div>
<svg style="position:absolute;left:697px;top:43px;overflow:visible" width="8" height="8" viewBox="0 0 8 8"><path d="M1 1 L7 7 M7 1 L1 7" stroke="#83878a" stroke-width="1"/></svg>
<div class="abs" style="left:452px;top:420px;width:891px;height:22px;background:#323232"></div>
<div class="abs" style="left:535px;top:68px;width:1px;height:454px;background:#3b3d3f"></div>
<div class="abs" style="left:535px;top:563px;width:1px;height:131px;background:#3b3d3f"></div>
<div class="abs" style="left:566px;top:420px;width:1px;height:22px;background:#3f4041"></div>
<div class="abs" style="left:566px;top:621px;width:1px;height:44px;background:#393a3b"></div>
<div class="abs" style="left:452px;top:68px;width:891px;height:454px;overflow:hidden">
<div class="ln" style="left:0;top:0px">11</div>
<div class="code" style="left:85px;top:0px"><span class="c">/**</span></div>
<div class="ln" style="left:0;top:22px">12</div>
<div class="code" style="left:85px;top:22px"><span class="c"> * OA <span class="cj">请假单的结果的监听器实现类</span></span></div>
<div class="ln" style="left:0;top:44px">13</div>
<div class="code" style="left:85px;top:44px"><span class="c"> *</span></div>
<div class="ln" style="left:0;top:66px">14</div>
<div class="code" style="left:85px;top:66px"><span class="c"> * </span><span class="tag">@author</span><span class="c"> <span class="cj">芋道源码</span></span></div>
<div class="ln" style="left:0;top:88px">15</div>
<div class="code" style="left:85px;top:88px"><span class="c"> */</span></div>
<div class="ln" style="left:0;top:110px">16</div>
<div class="code" style="left:85px;top:110px"><span class="a">@Component</span></div>
<div class="ln" style="left:0;top:132px">17</div>
<div class="code" style="left:85px;top:132px"><span class="k">public class</span> BpmOALeaveStatusListener <span class="k">extends</span> BpmProcessInstanceStatusEventListener {</div>
<div class="ln" style="left:0;top:154px">18</div>
<div class="ln" style="left:0;top:176px">19</div>
<div class="code" style="left:85px;top:176px">    <span class="a">@Resource</span></div>
<div class="ln" style="left:0;top:198px">20</div>
<div class="code" style="left:85px;top:198px">    <span class="k">private</span> BpmOALeaveService <span class="f">leaveService</span><span class="k">;</span></div>
<div class="ln" style="left:0;top:220px">21</div>
<div class="ln" style="left:0;top:242px">22</div>
<div class="code" style="left:85px;top:242px">    <span class="a">@Override</span></div>
<div class="ln" style="left:0;top:264px">23</div>
<div class="code" style="left:85px;top:264px">    <span class="k">protected</span> String <span class="m">getProcessDefinitionKey</span>()<span class="fold"> { </span><span class="k">return</span> BpmOALeaveServiceImpl.<span class="sf">PROCESS_KEY</span><span class="k">;</span><span class="fold"> }</span></div>
<div class="ln" style="left:0;top:286px">26</div>
<div class="ln" style="left:0;top:308px">27</div>
<div class="code" style="left:85px;top:308px">    <span class="a">@Override</span></div>
<div class="ln" style="left:0;top:330px">28</div>
<div class="code" style="left:85px;top:330px">    <span class="k">protected void</span> <span class="m">onEvent</span>(BpmProcessInstanceStatusEvent event) {</div>
<div class="ln" style="left:0;top:352px;color:#a4a3a3">29</div>
<div class="code" style="left:85px;top:352px">        <span class="f">leaveService</span>.<span class="hl">updateLeaveStatus</span>(Long.<span class="sm">parseLong</span>(event.getBusinessKey())<span class="k">,</span> event.getStatus())<span class="k">;</span></div>
<div class="ln" style="left:0;top:374px">30</div>
<div class="code" style="left:85px;top:374px">    }</div>
<div class="ln" style="left:0;top:396px">31</div>
<div class="ln" style="left:0;top:418px">32</div>
<div class="code" style="left:85px;top:418px">}</div>
<div class="ln" style="left:0;top:440px">33</div>
</div>
<div class="abs" style="left:452px;top:522px;width:891px;height:41px;background:#3c3f41"></div>
<div class="abs" style="left:452px;top:522px;width:248px;height:41px;background:#4e5254"></div>
<div class="abs" style="left:452px;top:560px;width:248px;height:3px;background:#4a88c7"></div>
<svg style="position:absolute;left:464px;top:534px;overflow:visible" width="16" height="16" viewBox="0 0 16 16"><circle cx="8" cy="8" r="6.5" fill="#25324d" stroke="#548af7" stroke-width="1.1"/><text x="8" y="11.3" text-anchor="middle" font-family='"Liberation Sans",sans-serif' font-size="9.5" fill="#548af7">C</text></svg>
<div class="t" style="left:485px;top:532px;color:#c4c6c8;letter-spacing:-0.023px;">BpmOALeaveServiceImpl.java</div>
<svg style="position:absolute;left:680px;top:538px;overflow:visible" width="8" height="8" viewBox="0 0 8 8"><path d="M1 1 L7 7 M7 1 L1 7" stroke="#83878a" stroke-width="1"/></svg>
<div class="abs" style="left:452px;top:563px;width:891px;height:131px;overflow:hidden">
<div class="abs" style="left:0;top:124px;width:891px;height:22px;background:#323232"></div>
<div class="abs" style="left:85px;top:126px;width:2px;height:18px;background:#bbbbbb"></div>
<div class="ln" style="left:0;top:-8px">66</div>
<div class="ln" style="left:0;top:14px">67</div>
<div class="code" style="left:85px;top:14px">    <span class="a">@Override</span></div>
<div class="ln" style="left:0;top:36px">68</div>
<div class="code" style="left:85px;top:36px">    <span class="k">public void</span> <span class="m">updateLeaveStatus</span>(Long id<span class="k">,</span> Integer status) {</div>
<div class="ln" style="left:0;top:58px">69</div>
<div class="code" style="left:85px;top:58px">        validateLeaveExists(id)<span class="k">;</span></div>
<div class="ln" style="left:0;top:80px">70</div>
<div class="code" style="left:85px;top:80px">        <span class="f">leaveMapper</span>.updateById(<span class="k">new</span> BpmOALeaveDO().setId(id).setStatus(status))<span class="k">;</span></div>
<div class="ln" style="left:0;top:102px">71</div>
<div class="code" style="left:85px;top:102px">    }</div>
<div class="ln" style="left:0;top:124px">72</div>
</div>
<svg style="position:absolute;left:488px;top:181px;overflow:visible" width="16" height="16" viewBox="0 0 16 16"><circle cx="7.5" cy="8" r="6.3" fill="#253627" stroke="#57965c" stroke-width="1.1"/><path d="M3.2 3.6 L11.8 12.4" stroke="#57965c" stroke-width="1.2"/><path d="M9.2 4.2 L11 6 L14.6 1.8" fill="none" stroke="#2b2b2b" stroke-width="3"/><path d="M9.2 4.2 L11 6 L14.6 1.8" fill="none" stroke="#d0d2d4" stroke-width="1.2"/></svg>
<svg style="position:absolute;left:488px;top:203px;overflow:visible" width="16" height="16" viewBox="0 0 16 16"><circle cx="7.5" cy="8" r="6.3" fill="#253627" stroke="#57965c" stroke-width="1.1"/><path d="M3.2 3.6 L11.8 12.4" stroke="#57965c" stroke-width="1.2"/><path d="M15.6 9.6 V14.6 H10.6 Z" fill="#2b2b2b"/><path d="M15.4 10.6 V14.4 H11.6 Z" fill="#d4d6d8"/></svg>
<svg style="position:absolute;left:488px;top:269px;overflow:visible" width="16" height="16" viewBox="0 0 16 16"><circle cx="7.5" cy="8" r="6.3" fill="#253627" stroke="#57965c" stroke-width="1.1"/><path d="M3.2 3.6 L11.8 12.4" stroke="#57965c" stroke-width="1.2"/><path d="M7.5 11.6 H15 M12.2 8.8 L15 11.6 L12.2 14.4" fill="none" stroke="#2b2b2b" stroke-width="3"/><path d="M7.5 11.6 H15 M12.2 8.8 L15 11.6 L12.2 14.4" fill="none" stroke="#d0d2d4" stroke-width="1.1" stroke-linecap="round" stroke-linejoin="round"/></svg>
<svg style="position:absolute;left:487.5px;top:334px;overflow:visible" width="16" height="16" viewBox="0 0 16 16"><circle cx="6" cy="9" r="5.2" fill="#253627" stroke="#57965c" stroke-width="1.1"/><path d="M4.3 6.6 H7.7 M4.3 11.4 H7.7 M6 6.6 V11.4" stroke="#57965c" stroke-width="1" fill="none"/><path d="M12 10.2 V2.6 M9.8 4.8 L12 2.4 L14.2 4.8" fill="none" stroke="#2b2b2b" stroke-width="2.6"/><path d="M12 10.2 V2.6 M9.8 4.8 L12 2.4 L14.2 4.8" fill="none" stroke="#e55765" stroke-width="1.1" stroke-linecap="round" stroke-linejoin="round"/></svg>
<svg style="position:absolute;left:487.5px;top:400px;overflow:visible" width="16" height="16" viewBox="0 0 16 16"><circle cx="6" cy="9" r="5.2" fill="#253627" stroke="#57965c" stroke-width="1.1"/><path d="M4.3 6.6 H7.7 M4.3 11.4 H7.7 M6 6.6 V11.4" stroke="#57965c" stroke-width="1" fill="none"/><path d="M12 10.2 V2.6 M9.8 4.8 L12 2.4 L14.2 4.8" fill="none" stroke="#2b2b2b" stroke-width="2.6"/><path d="M12 10.2 V2.6 M9.8 4.8 L12 2.4 L14.2 4.8" fill="none" stroke="#e55765" stroke-width="1.1" stroke-linecap="round" stroke-linejoin="round"/></svg>
<svg style="position:absolute;left:487.5px;top:601px;overflow:visible" width="16" height="16" viewBox="0 0 16 16"><circle cx="6" cy="9" r="5.2" fill="#253627" stroke="#57965c" stroke-width="1.1"/><path d="M4.3 6.6 H7.7 M4.3 11.4 H7.7 M6 6.6 V11.4" stroke="#57965c" stroke-width="1" fill="none"/><path d="M12 10.2 V2.6 M9.8 4.8 L12 2.4 L14.2 4.8" fill="none" stroke="#2b2b2b" stroke-width="2.6"/><path d="M12 10.2 V2.6 M9.8 4.8 L12 2.4 L14.2 4.8" fill="none" stroke="#e55765" stroke-width="1.1" stroke-linecap="round" stroke-linejoin="round"/></svg>
<svg style="position:absolute;left:504px;top:400.5px;overflow:visible" width="16" height="16" viewBox="0 0 16 16"><circle cx="8" cy="8" r="6.4" fill="none" stroke="#d0d2d4" stroke-width="1.2" stroke-dasharray="34 7" transform="rotate(58 8 8)"/><circle cx="8" cy="8" r="2.6" fill="none" stroke="#d0d2d4" stroke-width="1.2"/><path d="M10.8 5.2 V9 Q10.8 10.8 12.4 10.8 Q14.4 10.6 14.4 8" fill="none" stroke="#d0d2d4" stroke-width="1.2"/></svg>
<svg style="position:absolute;left:525px;top:339px;overflow:visible" width="6" height="9" viewBox="0 0 6 9"><path d="M1 1 L5 4.6 L1 8.2" fill="none" stroke="#707376" stroke-width="1.1" stroke-linecap="round" stroke-linejoin="round"/></svg>
<div class="abs" style="left:201px;top:403px;width:240px;height:44px;border:3px solid #ee4480;border-radius:1px"></div>
<svg class="abs" style="left:0;top:0" width="1343" height="694" viewBox="0 0 1343 694" fill="none" stroke="#ee4480" stroke-width="3" stroke-linecap="round" stroke-linejoin="round"><path d="M423 392 C423.5 380 424 372 426 362 C429 348 436 334 446 321 C456 309 470 294 489 281 C502 272 520 262 538 253.5 C548 249 564 240 578 228"/><path d="M560 229 C568 224 578 221 587 220.2 C588 226 587 231 584.5 236"/><path d="M765.3 448 C767 458 768 468 767.3 477 C765 484 762 488 760.5 491 C758 498 756 504 753.5 509 C750 515 746 520 742.5 525 C738 530 733 534 728 538 C722 542 716 546 709 550.5"/><path d="M720.3 528.2 C716 536 712 543 708.2 551.4 C718 552.5 730 552 740.5 551"/></svg>
</body></html>
